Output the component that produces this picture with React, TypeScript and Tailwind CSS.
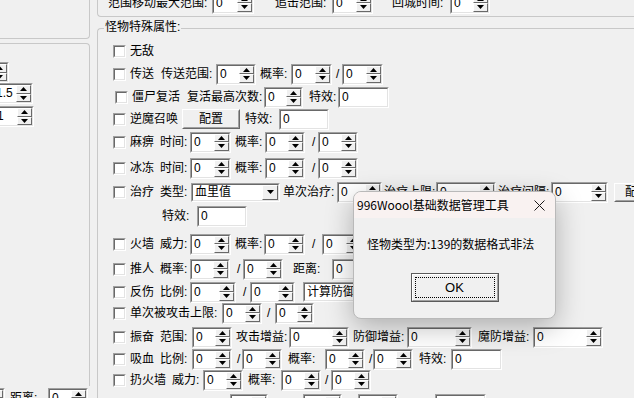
import React from 'react';

type P = { c?: string; children?: React.ReactNode };

function Tri({ up }: { up?: boolean }) {
  return (
    <svg width="7" height="4" viewBox="0 0 7 4">
      <polygon points={up ? '0,4 7,4 3.5,0' : '0,0 7,0 3.5,4'} fill="#000" />
    </svg>
  );
}

// classic sunken 2px frame
function Sunk({ c = '', children }: P) {
  return (
    <div className={`shrink-0 border border-t-[#a0a0a0] border-l-[#a0a0a0] border-r-white border-b-white ${c}`}>
      <div className="flex h-full border border-t-[#696969] border-l-[#696969] border-r-[#e3e3e3] border-b-[#e3e3e3] bg-white">
        {children}
      </div>
    </div>
  );
}

function Spin({ c = '', v = '0' }: { c?: string; v?: string }) {
  return (
    <Sunk c={`h-[21px] ${c}`}>
      <div className="flex-1 overflow-hidden whitespace-nowrap pl-[2px] leading-[17px]">{v}</div>
      <div className="flex w-[15px] flex-col">
        <div className="flex flex-1 items-center justify-center border border-t-white border-l-white border-r-[#696969] border-b-[#696969] bg-[#f0f0f0]">
          <Tri up />
        </div>
        <div className="flex flex-1 items-center justify-center border border-t-white border-l-white border-r-[#696969] border-b-[#696969] bg-[#f0f0f0]">
          <Tri />
        </div>
      </div>
    </Sunk>
  );
}

function Edit({ c = '', v = '0' }: { c?: string; v?: string }) {
  return (
    <Sunk c={`h-[21px] ${c}`}>
      <div className="pl-[2px] leading-[17px]">{v}</div>
    </Sunk>
  );
}

function Combo({ c = '', v }: { c?: string; v: string }) {
  return (
    <Sunk c={c}>
      <div className="flex flex-1 items-center overflow-hidden whitespace-nowrap pl-[2px]">{v}</div>
      <div className="flex w-[16px] items-center justify-center border border-t-white border-l-white border-r-[#696969] border-b-[#696969] bg-[#f0f0f0]">
        <Tri />
      </div>
    </Sunk>
  );
}

function Cb({ c = '' }: { c?: string }) {
  return <Sunk c={`h-[13px] w-[13px] ${c}`} />;
}

function Btn({ c = '', children }: P) {
  return (
    <div className={`shrink-0 border border-t-white border-l-white border-r-[#696969] border-b-[#696969] bg-[#f0f0f0] ${c}`}>
      <div className="flex h-full items-center justify-center whitespace-nowrap border border-t-[#f0f0f0] border-l-[#f0f0f0] border-r-[#a0a0a0] border-b-[#a0a0a0]">
        {children}
      </div>
    </div>
  );
}

function L({ c = '', children }: P) {
  return <span className={`shrink-0 whitespace-nowrap leading-[16px] ${c}`}>{children}</span>;
}

function Row({ c = '', children }: P) {
  return <div className={`flex h-[22px] shrink-0 items-center ${c}`}>{children}</div>;
}

function LeftPane() {
  return (
    <div className="w-[90px] shrink-0">
      <div className="h-[39px] rounded-br-[4px] border-r border-b border-[#c8c8c8]" />
      <div className="mt-[4px] h-[343px] rounded-tr-[4px] border-t border-r border-[#c8c8c8]">
        <Spin c="mt-[18px] -ml-[32px] w-[41px]" />
        <Spin c="-ml-[8px] w-[41px]" v="1.5" />
        <Spin c="mt-[2px] -ml-[7px] w-[41px]" v="1" />
      </div>
      <Row c="mt-px">
        <Spin c="-ml-[36px] w-[41px]" />
        <L c="ml-[5px] w-[38px]">距离:</L>
        <Spin c="w-[40px]" />
      </Row>
    </div>
  );
}

function RightPane() {
  return (
    <div className="min-w-0 flex-1">
      <div className="flex h-[17px] flex-col rounded-bl-[4px] border-b border-l border-[#c8c8c8]">
        <Row c="-mt-[8px]">
          <L c="ml-[10px] w-[104px]">范围移动最大范围:</L>
          <Spin c="w-[42px]" />
          <L c="ml-[21px] w-[57px]">追击范围:</L>
          <Spin c="w-[41px]" />
          <L c="ml-[19px] w-[58px]">回城时间:</L>
          <Spin c="w-[40px]" />
        </Row>
      </div>

      <div className="relative mt-[11px] h-[400px] rounded-tl-[4px] border-t border-l border-[#c8c8c8]">
        <span className="absolute -top-[10px] left-[6px] bg-[#f0f0f0] px-px leading-[16px]">怪物特殊属性:</span>

        <Row c="mt-[11px]">
          <Cb c="ml-[15px]" />
          <L c="ml-[4px]">无敌</L>
        </Row>

        <Row c="mt-px">
          <Cb c="ml-[15px]" />
          <L c="ml-[4px] w-[31px]">传送</L>
          <L c="w-[55px]">传送范围:</L>
          <Spin c="w-[40px]" />
          <L c="ml-[4px] w-[31px]">概率:</L>
          <Spin c="w-[41px]" />
          <L c="ml-[4px] w-[6px]">/</L>
          <Spin c="w-[41px]" />
        </Row>

        <Row c="mt-px">
          <Cb c="ml-[17px]" />
          <L c="ml-[4px] w-[55px]">僵尸复活</L>
          <L c="w-[77px]">复活最高次数:</L>
          <Spin c="w-[39px]" />
          <L c="ml-[6px] w-[29px]">特效:</L>
          <Edit c="w-[51px]" />
        </Row>

        <Row>
          <Cb c="ml-[15px]" />
          <L c="ml-[4px] w-[52px]">逆魔召唤</L>
          <Btn c="h-[20px] w-[58px]">配置</Btn>
          <L c="ml-[5px] w-[34px]">特效:</L>
          <Edit c="w-[50px]" />
        </Row>

        <Row c="mt-px">
          <Cb c="ml-[15px]" />
          <L c="ml-[4px] w-[30px]">麻痹</L>
          <L c="w-[30px]">时间:</L>
          <Spin c="w-[41px]" />
          <L c="ml-[4px] w-[30px]">概率:</L>
          <Spin c="w-[40px]" />
          <L c="ml-[7px] w-[6px]">/</L>
          <Spin c="w-[40px]" />
        </Row>

        <Row c="mt-[4px]">
          <Cb c="ml-[15px]" />
          <L c="ml-[4px] w-[30px]">冰冻</L>
          <L c="w-[30px]">时间:</L>
          <Spin c="w-[41px]" />
          <L c="ml-[4px] w-[30px]">概率:</L>
          <Spin c="w-[40px]" />
          <L c="ml-[7px] w-[6px]">/</L>
          <Spin c="w-[40px]" />
        </Row>

        <Row c="mt-[2px]">
          <Cb c="ml-[15px]" />
          <L c="ml-[4px] w-[30px]">治疗</L>
          <L c="w-[31px]">类型:</L>
          <Combo c="h-[19px] w-[89px]" v="血里值" />
          <L c="ml-[3px] w-[54px]">单次治疗:</L>
          <Spin c="w-[45px]" />
          <L c="ml-[2px] w-[52px]">治疗上限:</L>
          <Spin c="w-[60px]" />
          <L c="ml-[2px] w-[53px]">治疗间隔:</L>
          <Spin c="w-[57px]" />
          <Btn c="ml-[6px] h-[19px] w-[46px]">配置</Btn>
        </Row>

        <Row c="mt-[2px]">
          <L c="ml-[64px] w-[35px]">特效:</L>
          <Edit c="w-[50px]" />
        </Row>

        <Row c="mt-[6px]">
          <Cb c="ml-[15px]" />
          <L c="ml-[4px] w-[30px]">火墙</L>
          <L c="w-[30px]">威力:</L>
          <Spin c="w-[41px]" />
          <L c="ml-[4px] w-[29px]">概率:</L>
          <Spin c="w-[41px]" />
          <L c="ml-[7px] w-[10px]">/</L>
          <Spin c="w-[41px]" />
        </Row>

        <Row c="mt-[3px]">
          <Cb c="ml-[15px]" />
          <L c="ml-[4px] w-[30px]">推人</L>
          <L c="w-[30px]">概率:</L>
          <Spin c="w-[40px]" />
          <L c="ml-[7px] w-[6px]">/</L>
          <Spin c="w-[40px]" />
          <L c="ml-[10px] w-[39px]">距离:</L>
          <Spin c="w-[41px]" />
        </Row>

        <Row c="mt-px">
          <Cb c="ml-[15px]" />
          <L c="ml-[4px] w-[30px]">反伤</L>
          <L c="w-[30px]">比例:</L>
          <Spin c="w-[46px]" />
          <L c="ml-[7px] w-[7px]">/</L>
          <Spin c="w-[45px]" />
          <Combo c="ml-[8px] h-[20px] w-[80px]" v="计算防御" />
        </Row>

        <Row c="-mt-px">
          <Cb c="ml-[15px]" />
          <L c="ml-[4px] w-[92px]">单次被攻击上限:</L>
          <Spin c="w-[40px]" />
          <L c="ml-[5px] w-[8px]">/</L>
          <Spin c="w-[39px]" />
        </Row>

        <Row c="mt-[2px]">
          <Cb c="ml-[15px]" />
          <L c="ml-[4px] w-[30px]">振奋</L>
          <L c="w-[32px]">范围:</L>
          <Spin c="w-[40px]" />
          <L c="ml-[4px] w-[53px]">攻击增益:</L>
          <Spin c="w-[60px]" />
          <L c="ml-[4px] w-[54px]">防御增益:</L>
          <Spin c="w-[65px]" />
          <L c="ml-[6px] w-[55px]">魔防增益:</L>
          <Spin c="w-[70px]" />
        </Row>

        <Row>
          <Cb c="ml-[15px]" />
          <L c="ml-[4px] w-[30px]">吸血</L>
          <L c="w-[32px]">比例:</L>
          <Spin c="w-[40px]" />
          <L c="ml-[5px] w-[5px]">/</L>
          <Spin c="w-[40px]" />
          <L c="ml-[6px] w-[37px]">概率:</L>
          <Spin c="w-[40px]" />
          <L c="ml-[4px] w-[4px]">/</L>
          <Spin c="w-[40px]" />
          <L c="ml-[6px] w-[32px]">特效:</L>
          <Edit c="w-[51px]" />
        </Row>

        <Row c="-mt-px">
          <Cb c="ml-[15px]" />
          <L c="ml-[4px] w-[42px]">扔火墙</L>
          <L c="w-[31px]">威力:</L>
          <Spin c="w-[40px]" />
          <L c="ml-[5px] w-[33px]">概率:</L>
          <Spin c="w-[40px]" />
          <L c="ml-[4px] w-[6px]">/</L>
          <Spin c="w-[40px]" />
        </Row>

        <Row c="mt-[2px]">
          <Spin c="ml-[132px] w-[38px]" />
          <Spin c="ml-[35px] w-[39px]" />
          <Spin c="ml-[16px] w-[40px]" />
          <Edit c="ml-[37px] w-[51px]" />
        </Row>
      </div>
    </div>
  );
}

function MsgBox() {
  return (
    <div className="absolute left-[353px] top-[191px] flex h-[128px] w-[203px] flex-col overflow-hidden rounded-[8px] border border-[#b9b9b9] bg-[#f0f0f0] font-['Noto_Sans_CJK_SC',sans-serif] shadow-[0_8px_28px_rgba(0,0,0,0.28)]">
      <div className="flex h-[26px] shrink-0 items-center bg-[#f9f2f1] pl-[3px] pr-[10px]">
        <span className="leading-[16px]">996Woool基础数据管理工具</span>
        <svg className="ml-auto" width="11" height="11" viewBox="0 0 11 11">
          <path d="M0.5 0.5L10.5 10.5M10.5 0.5L0.5 10.5" stroke="#1a1a1a" strokeWidth="1" />
        </svg>
      </div>
      <div className="pl-[13px] pt-[18px] leading-[16px]">怪物类型为:139的数据格式非法</div>
      <div className="mt-[21px] flex justify-center">
        <div className="h-[29px] w-[88px] border border-[#5a5a5a] bg-[#f0f0f0]">
          <div className="h-full border border-t-white border-l-white border-r-[#a0a0a0] border-b-[#a0a0a0] p-[2px]">
            <div className="flex h-full items-center justify-center border border-dotted border-black font-['Liberation_Sans',sans-serif] text-[13px]">
              OK
            </div>
          </div>
        </div>
      </div>
    </div>
  );
}

export default function App() {
  return (
    <div className="relative h-[398px] w-[634px] overflow-hidden bg-[#f0f0f0] font-['Liberation_Sans','Noto_Sans_CJK_SC',sans-serif] text-[12px] text-black">
      <div className="flex h-full">
        <LeftPane />
        <div className="w-[7px] shrink-0" />
        <RightPane />
      </div>
      <MsgBox />
    </div>
  );
}
